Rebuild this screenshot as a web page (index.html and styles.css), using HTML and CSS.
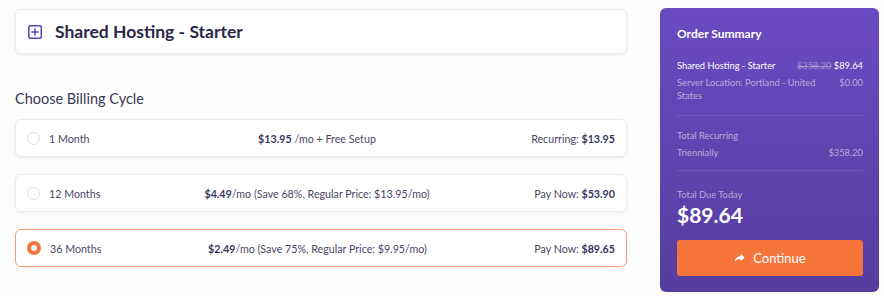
FILE: index.html
```html
<!DOCTYPE html>
<html lang="en">
<head>
<meta charset="UTF-8" />
<title>Configure - Shared Hosting</title>
<link rel="stylesheet" href="styles.css">
</head>
<body>

<div class="page">
  <div class="main">
    <div class="product-card">
      <svg class="product-icon" width="14" height="14" viewBox="0 0 14 14">
        <rect x="0.75" y="0.75" width="12.5" height="12.5" rx="1.5" fill="none" stroke="#5b3fb5" stroke-width="1.5"/>
        <path d="M7 3.8v6.4M3.8 7h6.4" stroke="#5b3fb5" stroke-width="1.5" stroke-linecap="round"/>
      </svg>
      <h2>Shared Hosting - Starter</h2>
    </div>

    <h3 class="section-title">Choose Billing Cycle</h3>

    <label class="cycle">
      <span class="radio"></span>
      <span class="cycle-name">1 Month</span>
      <span class="cycle-price"><b>$13.95</b> /mo + Free Setup</span>
      <span class="cycle-total">Recurring: <b>$13.95</b></span>
    </label>
    <label class="cycle">
      <span class="radio"></span>
      <span class="cycle-name">12 Months</span>
      <span class="cycle-price"><b>$4.49</b>/mo (Save 68%, Regular Price: $13.95/mo)</span>
      <span class="cycle-total">Pay Now: <b>$53.90</b></span>
    </label>
    <label class="cycle selected">
      <span class="radio"></span>
      <span class="cycle-name">36 Months</span>
      <span class="cycle-price"><b>$2.49</b>/mo (Save 75%, Regular Price: $9.95/mo)</span>
      <span class="cycle-total">Pay Now: <b>$89.65</b></span>
    </label>
  </div>

  <div class="summary">
    <h3>Order Summary</h3>
    <div class="line">
      <span>Shared Hosting - Starter</span>
      <span><s>$358.20</s> $89.64</span>
    </div>
    <div class="line muted">
      <span>Server Location: Portland - United States</span>
      <span>$0.00</span>
    </div>
    <hr>
    <div class="label">Total Recurring</div>
    <div class="line muted">
      <span>Triennially</span>
      <span>$358.20</span>
    </div>
    <hr class="hr-last">
    <div class="label label-due">Total Due Today</div>
    <div class="total">$89.64</div>
    <button class="continue">
      <svg width="11" height="10" viewBox="0 0 11 10"><path d="M6.5 0.5L10.6 4.4L6.5 8.3V5.9C3.6 5.9 1.7 6.8 0.3 9C0.8 5.6 2.8 3.4 6.5 2.9Z" fill="#fff"/></svg>
      Continue
    </button>
  </div>
</div>

</body>
</html>
```

FILE: styles.css
```css
html, body {
  margin: 0;
  padding: 0;
  background: #fdfdfe;
  font-family: Lato, 'Noto Sans', sans-serif;
  color: #4a4763;
}
.page {
  display: flex;
  align-items: flex-start;
  padding: 8px 0 0 15px;
}
.main {
  width: 612px;
}
.product-card {
  display: flex;
  align-items: center;
  height: 45px;
  margin-top: 1px;
  padding: 0 12px;
  background: #fff;
  border: 1px solid #ececf0;
  border-radius: 6px;
  box-shadow: 0 1px 3px rgba(30, 20, 60, 0.08);
  box-sizing: border-box;
}
.product-icon {
  margin-right: 13px;
}
.product-card h2 {
  margin: 0;
  font-size: 17.5px;
  font-weight: 700;
  color: #2b2748;
}
.section-title {
  margin: 36px 0 12px;
  font-size: 14.5px;
  font-weight: 400;
  color: #3b3853;
}
.cycle {
  display: flex;
  align-items: center;
  height: 38px;
  margin-bottom: 17px;
  padding: 0 11px 0 11px;
  background: #fff;
  border: 1px solid #ececf0;
  border-radius: 6px;
  box-shadow: 0 1px 3px rgba(30, 20, 60, 0.06);
  box-sizing: border-box;
  font-size: 10.7px;
  cursor: pointer;
}
.cycle + .cycle.selected {
  margin-top: 1px;
}
.cycle b {
  color: #3b3760;
}
.radio {
  width: 13px;
  height: 13px;
  border: 1px solid #dcdce2;
  border-radius: 50%;
  margin-right: 9px;
  box-sizing: border-box;
}
.selected {
  border-color: #f9a07a;
}
.selected .radio {
  border: 4px solid #f4733b;
  width: 14px;
  height: 14px;
}
.cycle-name {
  width: 140px;
}
.cycle-price {
  flex: 1;
  text-align: center;
}
.cycle-total {
  width: 170px;
  text-align: right;
}

.summary {
  width: 219px;
  margin-left: 33px;
  padding: 18px 16px 16px 17px;
  box-sizing: border-box;
  border-radius: 6px;
  background: linear-gradient(180deg, #6a4bc1 0%, #553d9f 100%);
  color: #fff;
  font-size: 9.3px;
}
.summary h3 {
  margin: 0 0 18px;
  font-size: 12px;
  font-weight: 700;
}
.line {
  display: flex;
  justify-content: space-between;
  gap: 10px;
  line-height: 13px;
  margin-bottom: 4px;
}
.line s {
  color: rgba(255, 255, 255, 0.4);
}
.muted, .label {
  color: rgba(255, 255, 255, 0.55);
}
.label {
  line-height: 13px;
  margin-bottom: 4px;
}
.summary hr {
  border: none;
  border-top: 1px solid rgba(255, 255, 255, 0.1);
  margin: 13px 0 13px;
}
.summary .hr-last {
  margin: 11px 0 17px;
}
.label-due {
  margin-bottom: 2px;
}
.total {
  font-size: 21px;
  line-height: 24px;
  font-weight: 700;
  margin: 0 0 13px;
}
.continue {
  display: flex;
  align-items: center;
  justify-content: center;
  gap: 8px;
  width: 100%;
  height: 36px;
  border: none;
  border-radius: 3px;
  background: #f4743c;
  color: #fff;
  font-family: inherit;
  font-size: 13px;
  cursor: pointer;
}
```
